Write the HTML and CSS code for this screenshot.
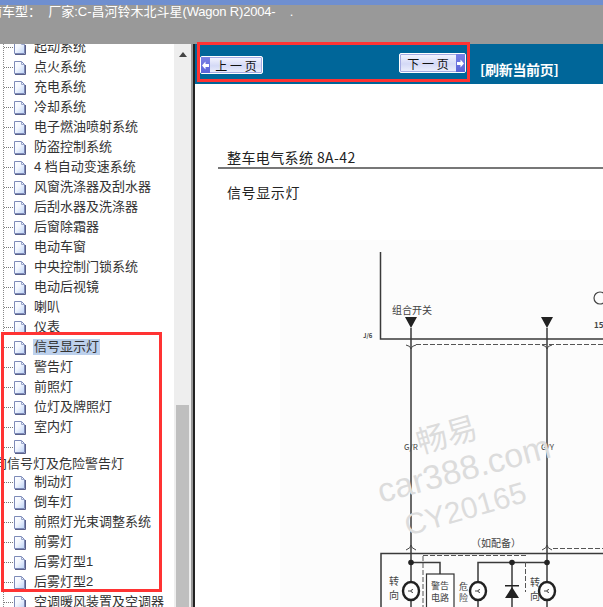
FILE: index.html
```html
<!DOCTYPE html>
<html lang="zh">
<head>
<meta charset="utf-8">
<title>信号显示灯</title>
<link rel="stylesheet" href="styles.css">
</head>
<body>
<svg class="defs" width="0" height="0">
  <defs>
    <linearGradient id="docfill" x1="0" y1="0" x2="1" y2="1">
      <stop offset="0" stop-color="#ffffff"/>
      <stop offset=".45" stop-color="#f2f6fe"/>
      <stop offset="1" stop-color="#bcd2f6"/>
    </linearGradient>
    <symbol id="doc" viewBox="0 0 13 15">
      <path d="M1.500 1.500H8.500L11.500 4.500V13.500H1.500Z" fill="url(#docfill)" stroke="#7d8ab8"/>
      <path d="M8.500 1V4.500H12" fill="none" stroke="#9aa6cc"/>
      <path d="M12.500 5V14.500H2" fill="none" stroke="#5a6088" stroke-width="1"/>
    </symbol>
  </defs>
</svg>
<div class="app">
  <header class="topbar">
    <div class="vehicle">当前车型：&nbsp;&nbsp;厂家:C-昌河铃木北斗星<span class="latin">(Wagon R)2004-</span>&nbsp;&nbsp;&nbsp;&nbsp;.</div>
  </header>
  <div class="main">
    <aside class="side">
      <div class="tree">
        <ul class="rows">
          <li class="row"><svg class="doc"><use href="#doc"/></svg><span>起动系统</span></li>
          <li class="row"><svg class="doc"><use href="#doc"/></svg><span>点火系统</span></li>
          <li class="row"><svg class="doc"><use href="#doc"/></svg><span>充电系统</span></li>
          <li class="row"><svg class="doc"><use href="#doc"/></svg><span>冷却系统</span></li>
          <li class="row"><svg class="doc"><use href="#doc"/></svg><span>电子燃油喷射系统</span></li>
          <li class="row"><svg class="doc"><use href="#doc"/></svg><span>防盗控制系统</span></li>
          <li class="row"><svg class="doc"><use href="#doc"/></svg><span>4 档自动变速系统</span></li>
          <li class="row"><svg class="doc"><use href="#doc"/></svg><span>风窗洗涤器及刮水器</span></li>
          <li class="row"><svg class="doc"><use href="#doc"/></svg><span>后刮水器及洗涤器</span></li>
          <li class="row"><svg class="doc"><use href="#doc"/></svg><span>后窗除霜器</span></li>
          <li class="row"><svg class="doc"><use href="#doc"/></svg><span>电动车窗</span></li>
          <li class="row"><svg class="doc"><use href="#doc"/></svg><span>中央控制门锁系统</span></li>
          <li class="row"><svg class="doc"><use href="#doc"/></svg><span>电动后视镜</span></li>
          <li class="row"><svg class="doc"><use href="#doc"/></svg><span>喇叭</span></li>
          <li class="row"><svg class="doc"><use href="#doc"/></svg><span>仪表</span></li>
          <li class="row"><svg class="doc"><use href="#doc"/></svg><span class="selected">信号显示灯</span></li>
          <li class="row"><svg class="doc"><use href="#doc"/></svg><span>警告灯</span></li>
          <li class="row"><svg class="doc"><use href="#doc"/></svg><span>前照灯</span></li>
          <li class="row"><svg class="doc"><use href="#doc"/></svg><span>位灯及牌照灯</span></li>
          <li class="row"><svg class="doc"><use href="#doc"/></svg><span>室内灯</span></li>
          <li class="row row-short"><svg class="doc"><use href="#doc"/></svg></li>
          <li class="wrapped">转向信号灯及危险警告灯</li>
          <li class="row"><svg class="doc"><use href="#doc"/></svg><span>制动灯</span></li>
          <li class="row"><svg class="doc"><use href="#doc"/></svg><span>倒车灯</span></li>
          <li class="row"><svg class="doc"><use href="#doc"/></svg><span>前照灯光束调整系统</span></li>
          <li class="row"><svg class="doc"><use href="#doc"/></svg><span>前雾灯</span></li>
          <li class="row"><svg class="doc"><use href="#doc"/></svg><span>后雾灯型1</span></li>
          <li class="row"><svg class="doc"><use href="#doc"/></svg><span>后雾灯型2</span></li>
          <li class="row"><svg class="doc"><use href="#doc"/></svg><span>空调暖风装置及空调器</span></li>
        </ul>
        <div class="redbox"></div>
      </div>
      <div class="scrollbar">
        <div class="arrow"></div>
        <div class="thumb"></div>
      </div>
    </aside>
    <div class="divider"></div>
    <section class="content">
      <nav class="nav">
        <div class="pager">
          <a class="btn btn-prev"><b class="cap"><svg width="7" height="9" viewBox="0 0 7 9"><path d="M0 4.500 3.500 .5V3H7V6H3.500V8.500Z" fill="#fff"/></svg></b><span>上 一 页</span></a>
          <a class="btn btn-next"><span>下 一 页</span><b class="cap"><svg width="7" height="9" viewBox="0 0 7 9"><path d="M7 4.500 3.500 .5V3H0V6H3.500V8.500Z" fill="#fff"/></svg></b></a>
        </div>
        <a class="refresh">[刷新当前页]</a>
      </nav>
      <div class="page">
        <h2 class="title">整车电气系统 8A-42</h2>
        <h3 class="subtitle">信号显示灯</h3>
        <svg class="diagram" width="408" height="397" viewBox="195 210 408 397">
          <rect x="280" y="240" width="323" height="367" fill="#fcfcfc"/>
          <g class="wires">
            <path d="M380.500 252V339H603"/>
            <path d="M411 328V607M547 328V607"/>
            <path d="M381 607V553.500H603"/>
            <path d="M411 562.500H440V574M547 562.500H478V584M512 562.500V607M478 600V607"/>
          </g>
          <path class="thin" d="M406 345Q411 346 411 349Q411 346 416 345M542 345Q547 346 547 349Q547 346 552 345M406 550Q411 548 411 545Q411 548 416 550M542 550Q547 548 547 545Q547 548 552 550"/>
          <path class="dash" d="M416 344.500H603M553 548.500H603M423 555.500H526M423 556V607M525.500 562V592"/>
          <path class="black" d="M405 317H417L411 328ZM541 317H553L547 328Z"/>
          <path class="black" d="M505 585H519V586.500H505ZM512 587 519 598H505Z"/>
          <circle class="black" cx="411" cy="562.500" r="2.800"/>
          <circle class="black" cx="547" cy="562.500" r="2.800"/>
          <circle class="black" cx="512" cy="562.500" r="2.800"/>
          <ellipse class="coil" cx="411" cy="591" rx="8" ry="9"/>
          <ellipse class="coil" cx="478" cy="591" rx="8" ry="9"/>
          <ellipse class="coil" cx="547" cy="591" rx="8" ry="9"/>
          <path class="thin" d="M413 589.500A2 1.500 0 1 0 413 592.500M408 591H411M480 589.500A2 1.500 0 1 0 480 592.500M475 591H478M549 589.500A2 1.500 0 1 0 549 592.500M544 591H547"/>
          <rect class="box" x="426.500" y="574" width="27.500" height="40"/>
          <text class="t10" x="392" y="314">组合开关</text>
          <text class="t7b" x="363" y="338">J/6</text>
          <text class="t8" x="404" y="450">G/R</text>
          <text class="t8" x="541" y="450">G/Y</text>
          <text class="t8b" x="594" y="328">15</text>
          <circle class="ring" cx="600" cy="298" r="6"/>
          <text class="t10" x="471" y="547">（如配备）</text>
          <text class="t10" x="389" y="585">转</text>
          <text class="t10" x="389" y="599">向</text>
          <text class="t9" x="431" y="589">警告</text>
          <text class="t9" x="431" y="601">电路</text>
          <text class="t9" x="459" y="590">危</text>
          <text class="t9" x="459" y="601">险</text>
          <text class="t10" x="530" y="586">转</text>
          <text class="t10" x="530" y="600">向</text>
          <g class="mark">
            <text class="m1" transform="translate(420 454) rotate(-16)">畅易</text>
            <text class="m2" transform="translate(381 503) rotate(-15)">car388.com</text>
            <text class="m3" transform="translate(408 536) rotate(-16)">CY20165</text>
          </g>
        </svg>
      </div>
    </section>
  </div>
  <div class="redframe"></div>
</div>
</body>
</html>
```
FILE: styles.css
```css
* { box-sizing: border-box; }
html, body { margin: 0; height: 100%; }
body {
  font-family: "Liberation Sans", "Noto Sans CJK SC", sans-serif;
  font-size: 13px;
  color: #333;
  background: #fff;
  overflow: hidden;
}
.defs { position: absolute; }
.app {
  position: relative;
  width: 603px;
  height: 607px;
  display: flex;
  flex-direction: column;
}
.topbar {
  height: 44px;
  flex: none;
  background: #999;
  border-top: 5px solid #6f8fd0;
  overflow: hidden;
}
.vehicle {
  margin: -1px 0 0 -24px;
  white-space: nowrap;
  font-size: 13px;
  line-height: 16px;
  color: #fff;
}
.latin { letter-spacing: -.2px; }
.main {
  flex: 1;
  display: flex;
  min-height: 0;
}
.side {
  width: 191px;
  flex: none;
  display: flex;
  overflow: hidden;
}
.tree {
  position: relative;
  width: 174px;
  flex: none;
  overflow: hidden;
  background: repeating-linear-gradient(to bottom, #888 0 1px, transparent 1px 2px) 3px 0 / 1px 100% no-repeat #fff;
}
.rows {
  list-style: none;
  margin: -7px 0 0;
  padding: 0;
}
.row {
  display: flex;
  align-items: center;
  height: 20px;
  padding-left: 13px;
  white-space: nowrap;
  line-height: 16px;
  position: relative;
}
.row::before {
  content: "";
  position: absolute;
  left: 4px;
  top: 10px;
  width: 10px;
  height: 1px;
  background: repeating-linear-gradient(to right, #777 0 1px, transparent 1px 2px);
}
.row-short { height: 19px; }
.doc {
  width: 13px;
  height: 15px;
  flex: none;
  margin-right: 8px;
  position: relative;
}
.row span { padding: 0 1px; margin-left: -1px; }
.selected { background: #bcd0ec; }
.wrapped {
  height: 16px;
  padding-left: 7px;
  line-height: 16px;
  white-space: nowrap;
  text-indent: -26px;
  background: #fff;
}
.redbox {
  position: absolute;
  left: 1px;
  top: 288px;
  width: 161px;
  height: 260px;
  border: 3px solid #f33;
}
.scrollbar {
  width: 17px;
  flex: none;
  background: #eee;
  padding-top: 8px;
  display: flex;
  flex-direction: column;
}
.arrow {
  width: 0;
  height: 0;
  margin: 0 auto;
  border: 4px solid transparent;
  border-top: 0;
  border-bottom: 5px solid #444;
}
.thumb {
  width: 13px;
  margin: 348px 0 0 2px;
  flex: 1;
  background: #bfbfbf;
}
.divider {
  width: 4px;
  flex: none;
  background: linear-gradient(to right, #999 0 2px, #222 2px);
}
.content {
  flex: 1;
  min-width: 0;
  display: flex;
  flex-direction: column;
  overflow: hidden;
}
.nav {
  height: 40px;
  flex: none;
  display: flex;
  align-items: flex-start;
  background: #069;
}
.pager {
  width: 271px;
  display: flex;
  justify-content: space-between;
  align-items: flex-start;
  padding: 9px 0 0 5px;
}
.btn {
  display: flex;
  align-items: center;
  height: 20px;
  width: 67px;
  background: linear-gradient(to bottom, #f6f6ff, #d4d9f6 55%, #eef0fc);
  border: 1px solid #fff;
  border-radius: 2px;
  box-shadow: inset 0 0 0 1px #a6abe2;
  color: #111;
  font-size: 12px;
  font-family: "Noto Sans CJK SC", sans-serif;
}
.btn span { flex: 1; text-align: center; }
.btn-prev { width: 63px; height: 18px; margin-top: 3px; }
.cap {
  width: 9px;
  height: 100%;
  background: linear-gradient(to bottom, #7a82e6, #5a63d8);
  display: flex;
  align-items: center;
  justify-content: center;
  flex: none;
}
.refresh {
  margin: 16px 0 0 14px;
  color: #fff;
  font-weight: 700;
  font-size: 14px;
  line-height: 18px;
  letter-spacing: -.3px;
  font-family: "Noto Sans CJK SC", sans-serif;
  white-space: nowrap;
}
.page {
  position: relative;
  flex: 1;
  min-height: 0;
  overflow: hidden;
  background: #fff;
}
.title {
  margin: 63px 0 0 23px;
  padding-left: 9px;
  height: 22px;
  font-size: 14px;
  line-height: 20px;
  letter-spacing: .4px;
  font-weight: 400;
  color: #222;
  font-family: "Noto Sans CJK SC", sans-serif;
  border-bottom: 2px solid #777;
}
.subtitle {
  margin: 13px 0 0 32px;
  font-size: 14px;
  line-height: 20px;
  letter-spacing: .6px;
  font-weight: 400;
  color: #222;
  font-family: "Noto Sans CJK SC", sans-serif;
}
.diagram {
  position: absolute;
  left: 0;
  top: 126px;
  display: block;
}
.wires path { fill: none; stroke: #3a3a3a; stroke-width: 1.500; }
.thin { fill: none; stroke: #444; stroke-width: 1; }
.dash { fill: none; stroke: #555; stroke-width: 1; stroke-dasharray: 5 2; }
.black { fill: #222; }
.coil { fill: #fff; stroke: #222; stroke-width: 2.400; }
.ring { fill: none; stroke: #444; stroke-width: 1.200; }
.box { fill: #fff; stroke: #333; stroke-width: 1.200; }
.diagram text { font-family: "Noto Sans CJK SC", sans-serif; fill: #444; }
.t10 { font-size: 10px; }
.t9 { font-size: 9px; }
.t8 { font-size: 8px; }
.t8b { font-size: 8px; font-weight: 700; }
.t7b { font-size: 6px; font-weight: 700; }
.diagram .mark text { fill: #dcdcdc; font-family: "Liberation Sans", "Noto Sans CJK SC", sans-serif; }
.mark .m1 { font-size: 31px; }
.mark .m2 { font-size: 34px; }
.mark .m3 { font-size: 30px; }
.redframe {
  position: absolute;
  left: 197px;
  top: 42px;
  width: 273px;
  height: 40px;
  border: 3px solid #f33;
  pointer-events: none;
}
```
